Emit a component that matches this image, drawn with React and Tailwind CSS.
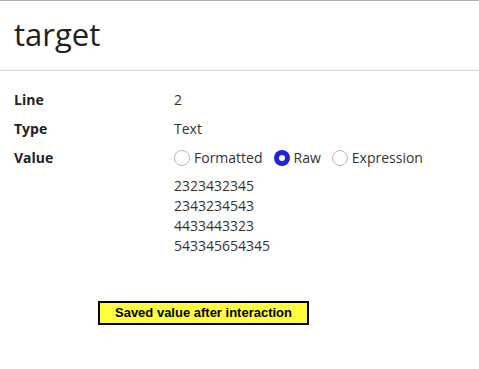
const Radio = ({ checked, label }) => (
  <label className="flex items-center gap-[4px]">
    {checked ? (
      <span className="w-4 h-4 rounded-full bg-[#2121e0] flex items-center justify-center">
        <span className="w-[6px] h-[6px] rounded-full bg-white"></span>
      </span>
    ) : (
      <span className="w-4 h-4 rounded-full border border-[#b8b8b8] bg-white"></span>
    )}
    <span>{label}</span>
  </label>
);

const Row = ({ label, children }) => (
  <div className="flex h-[29px] items-center">
    <div className="w-[160px] font-bold text-[#222]">{label}</div>
    <div className="text-[#333]">{children}</div>
  </div>
);

export default function App() {
  return (
    <div
      className="w-[479px] h-[369px] bg-white"
      style={{ fontFamily: '"Open Sans", sans-serif' }}
    >
      <div className="border-t border-t-[#adadad] border-b border-b-[#d4d4d4] h-[71px] flex items-center px-[14px]">
        <h1 className="text-[31px] text-[#222] leading-none -mt-[3px]">target</h1>
      </div>

      <div className="px-[14px] pt-[14px] text-[14px]">
        <Row label="Line">2</Row>
        <Row label="Type">Text</Row>
        <Row label="Value">
          <div className="flex items-center gap-[11px]">
            <Radio label="Formatted" />
            <Radio checked label="Raw" />
            <Radio label="Expression" />
          </div>
        </Row>
        <div className="pl-[160px] pt-[4px] leading-[20px] text-[#333]">
          <div>2323432345</div>
          <div>2343234543</div>
          <div>4433443323</div>
          <div>543345654345</div>
        </div>
      </div>

      <div className="pl-[98px] pt-[45px]">
        <div
          className="w-[211px] h-[24px] border-2 border-black bg-[#ffff40] flex items-center justify-center text-[13px] font-bold text-black"
          style={{ fontFamily: '"Liberation Sans", Arial, sans-serif' }}
        >
          Saved value after interaction
        </div>
      </div>
    </div>
  );
}
